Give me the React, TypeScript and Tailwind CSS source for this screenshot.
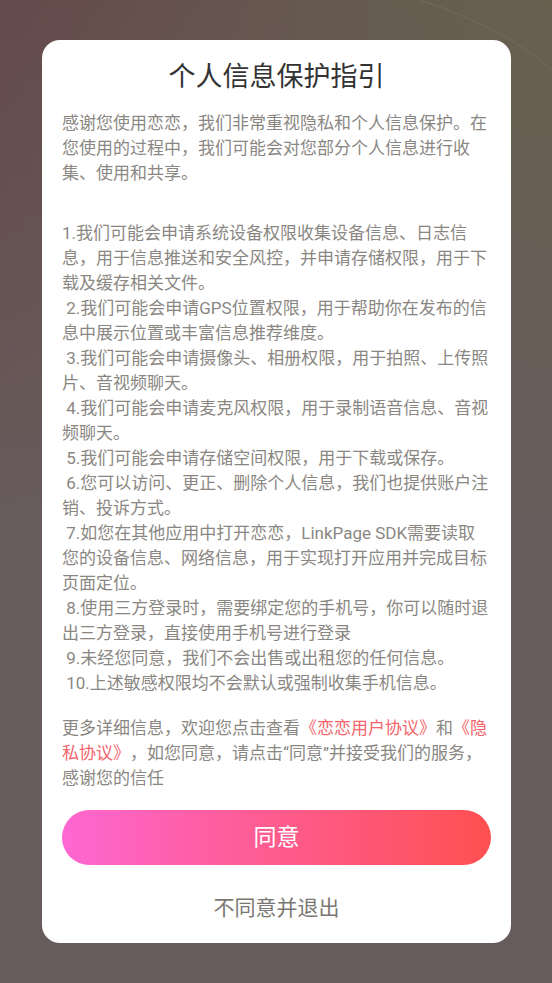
import React from "react";

const items = [
  "1.我们可能会申请系统设备权限收集设备信息、日志信息，用于信息推送和安全风控，并申请存储权限，用于下载及缓存相关文件。",
  " 2.我们可能会申请GPS位置权限，用于帮助你在发布的信息中展示位置或丰富信息推荐维度。",
  " 3.我们可能会申请摄像头、相册权限，用于拍照、上传照片、音视频聊天。",
  " 4.我们可能会申请麦克风权限，用于录制语音信息、音视频聊天。",
  " 5.我们可能会申请存储空间权限，用于下载或保存。",
  " 6.您可以访问、更正、删除个人信息，我们也提供账户注销、投诉方式。",
  " 7.如您在其他应用中打开恋恋，LinkPage SDK需要读取您的设备信息、网络信息，用于实现打开应用并完成目标页面定位。",
  " 8.使用三方登录时，需要绑定您的手机号，你可以随时退出三方登录，直接使用手机号进行登录",
  " 9.未经您同意，我们不会出售或出租您的任何信息。",
  " 10.上述敏感权限均不会默认或强制收集手机信息。",
];

export default function App() {
  return (
    <div
      className="relative w-[552px] h-[983px] overflow-hidden bg-[linear-gradient(to_bottom,rgba(104,92,92,0)_0%,#685c5c_55%,#675b5b_100%),linear-gradient(to_right,#644a4b_0%,#665a50_60%,#67604f_100%)] pt-[40px] pl-[42px] [text-spacing-trim:space-all]"
      style={{ fontFamily: 'Roboto, "Noto Sans CJK SC", "Noto Sans", sans-serif' }}
    >
      <svg className="absolute left-0 top-0 pointer-events-none" width="552" height="200" viewBox="0 0 552 200">
        <path d="M420 0 Q 505 28 552 70" fill="none" stroke="#7a766c" strokeOpacity="0.55" strokeWidth="1" />
      </svg>
      <div className="relative w-[469px] h-[903px] bg-white rounded-[18px] px-[20px] pt-[18px] flex flex-col">
        <h1 className="text-center text-[27px] leading-[38px] text-[#333333] font-normal">个人信息保护指引</h1>
        <p className="mt-[15px] text-[17px] leading-[25px] text-[#8a8783]">
          感谢您使用恋恋，我们非常重视隐私和个人信息保护。在您使用的过程中，我们可能会对您部分个人信息进行收集、使用和共享。
        </p>
        <div className="mt-[35px] text-[17px] leading-[25px] text-[#8a8783] whitespace-pre-wrap">
          {items.map((t, i) => (
            <div key={i}>{t}</div>
          ))}
        </div>
        <p className="mt-[20px] text-[17px] leading-[25px] text-[#8a8783]">
          更多详细信息，欢迎您点击查看<span className="text-[#f4646a]">《恋恋用户协议》</span>和<span className="text-[#f4646a]">《隐私协议》</span>，如您同意，请点击“同意”并接受我们的服务，感谢您的信任
        </p>
        <button className="mt-[19px] h-[55px] w-full rounded-full bg-[linear-gradient(to_right,#fe67d2,#fe5d9a_40%,#fe5670_75%,#fe5050)] text-white text-[23px] leading-[55px]">
          同意
        </button>
        <div className="mt-[29px] text-center text-[21px] leading-[28px] text-[#7a7773]">不同意并退出</div>
      </div>
    </div>
  );
}
